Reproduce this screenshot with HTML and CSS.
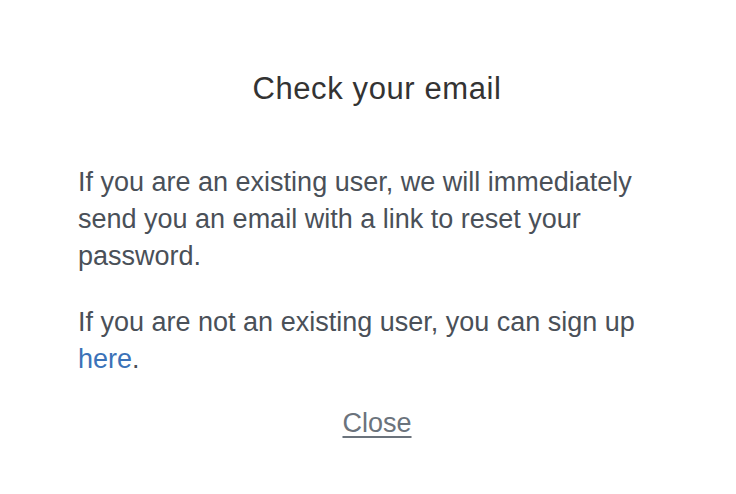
FILE: index.html
```html
<!DOCTYPE html>
<html>
<head>
<meta charset="utf-8">
<link rel="stylesheet" href="styles.css">
</head>
<body>
<div class="modal">
  <h2 class="title">Check your email</h2>
  <p class="text">If you are an existing user, we will immediately send you an email with a link to reset your password.</p>
  <p class="text">If you are not an existing user, you can sign up <a class="link" href="#">here</a>.</p>
  <div class="actions"><a class="close" href="#">Close</a></div>
</div>
</body>
</html>
```
FILE: styles.css
```css
html, body {
  margin: 0;
  padding: 0;
  background: #ffffff;
}
body {
  font-family: "Liberation Sans", Arial, sans-serif;
  width: 736px;
  height: 494px;
  overflow: hidden;
}
.modal {
  margin-left: 78px;
  width: 598px;
  padding-top: 69px;
}
.title {
  margin: 0 0 55px 0;
  text-align: center;
  font-weight: 400;
  font-size: 31px;
  line-height: 40px;
  color: #333333;
  letter-spacing: 0.6px;
}
.text {
  margin: 0 0 29px 0;
  font-size: 27px;
  line-height: 37px;
  color: #4a5058;
}
.text:last-of-type {
  margin-bottom: 0;
}
.link {
  color: #3b72b8;
  text-decoration: none;
}
.actions {
  text-align: center;
  margin-top: 27px;
  line-height: 37px;
}
.close {
  font-size: 27px;
  line-height: 37px;
  color: #6b737c;
  text-decoration: underline;
  text-underline-offset: 4px;
}
```
